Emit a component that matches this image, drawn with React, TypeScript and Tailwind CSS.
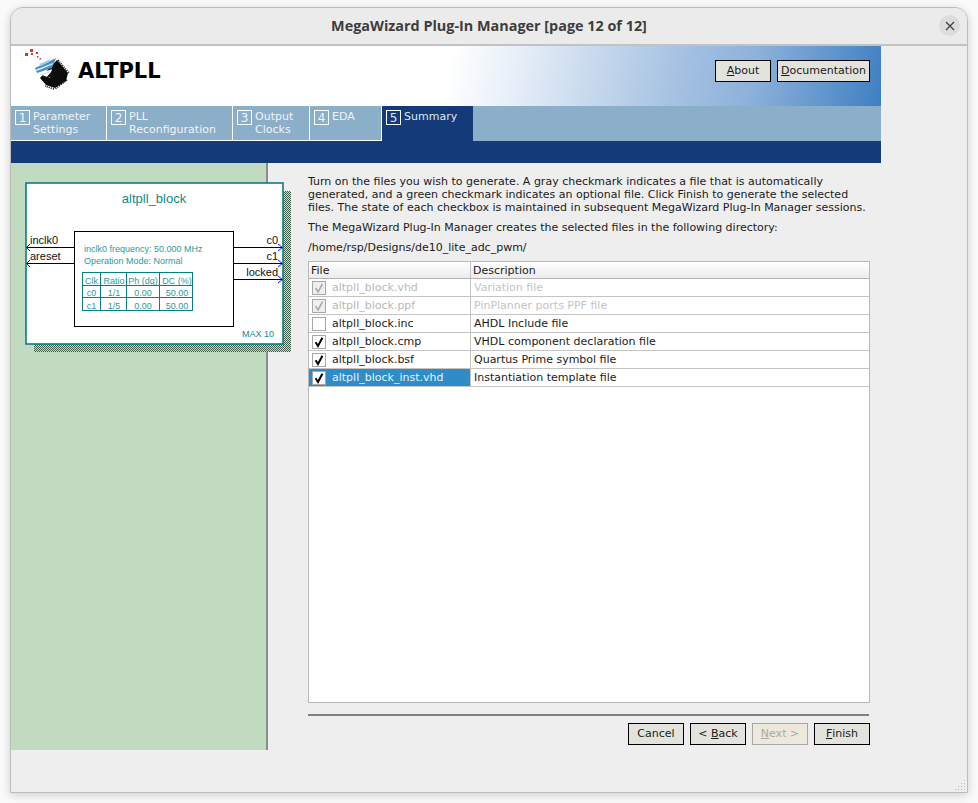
import type { ReactNode } from "react"

const tabs = [
  { n: 1, lines: ["Parameter", "Settings"], w: "w-[96px]" },
  { n: 2, lines: ["PLL", "Reconfiguration"], w: "w-[126px]" },
  { n: 3, lines: ["Output", "Clocks"], w: "w-[77px]" },
  { n: 4, lines: ["EDA"], w: "w-[72px]" },
  { n: 5, lines: ["Summary"], w: "w-[91px]", active: true },
]

const files = [
  { name: "altpll_block.vhd", desc: "Variation file", state: "locked" },
  { name: "altpll_block.ppf", desc: "PinPlanner ports PPF file", state: "locked" },
  { name: "altpll_block.inc", desc: "AHDL Include file", state: "off" },
  { name: "altpll_block.cmp", desc: "VHDL component declaration file", state: "on" },
  { name: "altpll_block.bsf", desc: "Quartus Prime symbol file", state: "on" },
  { name: "altpll_block_inst.vhd", desc: "Instantiation template file", state: "on", selected: true },
]

function Logo() {
  return (
    <svg width="48" height="44" viewBox="22 46 48 44" className="shrink-0">
      {/* red sparks */}
      <g fill="#d9342b">
        <rect x="25" y="53" width="3" height="3" />
        <rect x="30" y="49" width="3" height="3" />
        <rect x="31" y="53" width="2" height="2" />
        <rect x="36" y="52" width="2" height="2" />
        <rect x="37" y="56" width="1.5" height="1.5" />
        <rect x="39.5" y="58" width="1.5" height="1.5" />
      </g>
      {/* chip with pins */}
      <path d="M40 78 L57 60 L68 73 L66 81 L55 88 L46 85 Z" fill="#0c0c0c" />
      <path
        d="M58 60 L69 73 M67 80 L55 89 M54 89 L45 86"
        stroke="#222"
        strokeWidth="1.6"
        strokeDasharray="1.2 1"
        fill="none"
      />
      {/* sheet going into the chip */}
      <path d="M35 68 L56 58 L52 68 L37 73 Z" fill="#4a8cc4" />
      <path d="M39 64 L50 59.5 L50 61.5 L41 66 Z" fill="#a4cae6" />
      <path d="M36 69.5 L53 63 L52.5 64.5 L37 71 Z" fill="#dcebf6" />
      <path d="M39 74 L52 69 L50 78 Z" fill="#fff" />
      <path d="M45 79 L52 71 L53 76 Z" fill="#0c0c0c" />
      <path d="M41 75 L50 71.5" stroke="#bbb" strokeWidth="0.6" />
    </svg>
  )
}

function BarButton({ children, className = "" }: { children: ReactNode; className?: string }) {
  return (
    <button
      type="button"
      className={`flex h-[22px] items-center justify-center border border-black bg-[#e3e3dd] pt-px text-[11px] text-[#1a1a1a] ${className}`}
    >
      {children}
    </button>
  )
}

function Tab({ n, lines, w, active }: { n: number; lines: string[]; w: string; active?: boolean }) {
  return (
    <div
      className={`flex h-[35px] gap-[3px] pl-[4px] pt-[4px] text-[11px] leading-[13px] ${w} ${
        active
          ? "bg-[#143a78] text-[#dfe8f2]"
          : "border-r border-b border-white bg-[#8baec9] text-[#f0f4f8]"
      }`}
    >
      <span className="flex h-[15px] w-[15px] shrink-0 items-center justify-center border border-white text-[12px] leading-none">
        {n}
      </span>
      <div>
        {lines.map((l) => (
          <div key={l}>{l}</div>
        ))}
      </div>
    </div>
  )
}

function Check({ state }: { state: string }) {
  const locked = state === "locked"
  return (
    <span
      className={`mt-[1px] flex h-[14px] w-[14px] items-center justify-center border border-[#a8a8a8] ${
        locked ? "bg-[#eeeeee]" : "bg-white"
      }`}
    >
      {state !== "off" && (
        <svg width="12" height="12" viewBox="0 0 12 12">
          <path
            d="M2.6 6.2 L5 10 L9.4 1.8"
            fill="none"
            stroke={locked ? "#a6a6a6" : "#000"}
            strokeWidth={locked ? 1.5 : 2}
          />
        </svg>
      )}
    </span>
  )
}

// the block symbol is a picture in the wizard, coordinates are page pixels
function BlockDiagram() {
  const teal = "#068080"
  const tableX = [82.5, 100.5, 126, 159, 192.5]
  const tableY = [272.5, 285, 297.5, 310]
  const rows = [
    ["Clk", "Ratio", "Ph (dg)", "DC (%)"],
    ["c0", "1/1", "0.00", "50.00"],
    ["c1", "1/5", "0.00", "50.00"],
  ]
  const textX = [91.5, 114, 143, 177]
  return (
    <svg
      width="270"
      height="175"
      viewBox="24 181 270 175"
      className="ml-[13px] mt-[18px] block overflow-visible"
      fontFamily="'Liberation Sans', Arial, sans-serif"
    >
      <defs>
        <pattern id="hatch" width="2" height="2" patternUnits="userSpaceOnUse">
          <rect width="2" height="2" fill="#d3dccf" />
          <rect width="1" height="1" fill="#3e5a48" />
          <rect x="1" y="1" width="1" height="1" fill="#3e5a48" />
        </pattern>
      </defs>
      <rect x="34" y="191" width="257" height="161" fill="url(#hatch)" shapeRendering="crispEdges" />
      <rect x="26" y="183" width="257" height="161" fill="#fff" stroke={teal} strokeWidth="1.6" />
      <text x="154" y="203" textAnchor="middle" fontSize="13" fill="#108a8a">altpll_block</text>
      <rect x="74.5" y="231.5" width="159" height="95" fill="#fff" stroke="#000" />
      <g stroke="#000" shapeRendering="crispEdges">
        <path d="M27 247.5H74M27 263.5H74M234 247.5H282M234 263.5H282M234 279.5H282" />
      </g>
      <g stroke="#1010f0" fill="none" strokeWidth="1">
        <path d="M30 244L26.5 247.5L30 251M30 260L26.5 263.5L30 267" />
        <path d="M278 244L282.5 247.5L278 251M278 260L282.5 263.5L278 267M278 276L282.5 279.5L278 283" />
      </g>
      <g fontSize="11" fill="#111">
        <text x="30" y="244">inclk0</text>
        <text x="30" y="260">areset</text>
        <text x="278" y="244" textAnchor="end">c0</text>
        <text x="278" y="260" textAnchor="end">c1</text>
        <text x="278" y="276" textAnchor="end">locked</text>
      </g>
      <g fontSize="9" fill="#2a9c9c">
        <text x="84" y="252">inclk0 frequency: 50.000 MHz</text>
        <text x="84" y="264">Operation Mode: Normal</text>
        <text x="242" y="337" fill="#108a8a">MAX 10</text>
        {rows.map((r, i) =>
          r.map((c, j) => (
            <text key={c + i + j} x={textX[j]} y={tableY[i] + 11} textAnchor="middle">{c}</text>
          )),
        )}
      </g>
      <g stroke={teal} shapeRendering="crispEdges">
        {tableX.map((x) => (
          <path key={x} d={`M${x} 272V310.5`} />
        ))}
        {tableY.map((y) => (
          <path key={y} d={`M82 ${y}H193`} />
        ))}
      </g>
    </svg>
  )
}

export default function App() {
  return (
    <div className="h-[803px] w-[978px] overflow-hidden bg-[#fafafa] pl-[10px] pt-[7px] font-['DejaVu_Sans',sans-serif]">
      <div className="flex h-[786px] w-[958px] flex-col rounded-t-[13px] border border-[#bcbcbc] bg-[#eeeeee] shadow-[0_2px_10px_rgba(0,0,0,0.18)]">
        {/* title bar */}
        <div className="relative flex h-[38px] shrink-0 items-center justify-center rounded-t-[12px] border-b-2 border-[#c2c2c2] bg-[#ebebeb]">
          <span className="font-['Open_Sans',sans-serif] text-[14.4px] font-bold text-[#3d3d3d]">
            MegaWizard Plug-In Manager [page 12 of 12]
          </span>
          <span className="absolute right-[7px] top-[7px] flex h-[21px] w-[21px] items-center justify-center rounded-full bg-[#dcdcdc]">
            <svg width="10" height="10" viewBox="0 0 10 10">
              <path d="M1 1L9 9M9 1L1 9" stroke="#3d3d3d" strokeWidth="1.2" />
            </svg>
          </span>
        </div>

        {/* banner */}
        <div className="flex h-[60px] w-[870px] shrink-0 items-start bg-[linear-gradient(100deg,#ffffff_0%,#ffffff_50%,#e6eef8_58%,#a6c2e2_76%,#8cb1db_85%,#3f7fc2_100%)] pl-[11px] pr-[11px]">
          <Logo />
          <span className="ml-[8px] mt-[11px] text-[21px] font-bold leading-[28px] text-black">ALTPLL</span>
          <div className="ml-auto mt-[14px] flex gap-[6px]">
            <BarButton className="w-[56px]"><span className="underline">A</span>bout</BarButton>
            <BarButton className="w-[93px]"><span className="underline">D</span>ocumentation</BarButton>
          </div>
        </div>

        {/* steps */}
        <div className="flex w-[870px] shrink-0 bg-[#8baec9]">
          {tabs.map((t) => (
            <Tab key={t.n} {...t} />
          ))}
        </div>
        <div className="h-[22px] w-[870px] shrink-0 bg-[#143a78]" />

        <div className="flex h-[587px] shrink-0">
          {/* green side panel */}
          <div className="w-[257px] shrink-0 border-r-2 border-[#8c8c8c] bg-[#c0dbbf]">
            <BlockDiagram />
          </div>

          <div className="ml-[40px] flex w-[562px] flex-col">
            <div className="mt-[12px] text-[11px] leading-[13px] text-[#1a1a1a]">
              <p>
                Turn on the files you wish to generate. A gray checkmark indicates a file that is automatically
                <br />
                generated, and a green checkmark indicates an optional file. Click Finish to generate the selected
                <br />
                files. The state of each checkbox is maintained in subsequent MegaWizard Plug-In Manager sessions.
              </p>
              <p className="mt-[7px]">The MegaWizard Plug-In Manager creates the selected files in the following directory:</p>
              <p className="mt-[7px]">/home/rsp/Designs/de10_lite_adc_pwm/</p>
            </div>

            {/* file table */}
            <div className="mt-[7px] h-[442px] w-[562px] border border-[#b8b8b8] bg-white text-[11px] text-[#1a1a1a]">
              <div className="flex h-[17px] border-b border-[#b4b4b4] bg-[linear-gradient(#ffffff,#ececec)] leading-[17px]">
                <div className="w-[162px] border-r border-[#c4c4c4] pl-[2px]">File</div>
                <div className="pl-[2px]">Description</div>
              </div>
              {files.map((f) => (
                <div key={f.name} className="flex h-[18px] border-b border-[#c4c4c4] leading-[17px]">
                  <div
                    className={`flex w-[162px] items-center gap-[6px] border-r border-[#c4c4c4] pl-[3px] ${
                      f.selected ? "bg-[#308cc6] text-[#e6f2fa]" : f.state === "locked" ? "text-[#b8b8b8]" : ""
                    }`}
                  >
                    <Check state={f.state} />
                    <span>{f.name}</span>
                  </div>
                  <div className={`pl-[3px] ${f.state === "locked" ? "text-[#c4c4c4]" : ""}`}>{f.desc}</div>
                </div>
              ))}
            </div>

            <div className="mt-[11px] h-[2px] w-[561px] bg-[#808080]" />

            <div className="mt-[7px] flex justify-end gap-[6px]">
              <BarButton className="w-[56px]">Cancel</BarButton>
              <BarButton className="w-[56px]">&lt;&nbsp;<span className="underline">B</span>ack</BarButton>
              <button
                type="button"
                className="flex h-[22px] w-[56px] items-center justify-center border border-[#a6a6a6] bg-[#ece9dc] pt-px text-[11px] text-[#a8a8a8]"
              >
                <span className="underline">N</span>ext &gt;
              </button>
              <BarButton className="w-[56px]"><span className="underline">F</span>inish</BarButton>
            </div>
          </div>
        </div>

        {/* size grip */}
        <div className="mt-auto flex justify-end pb-[1px] pr-[1px]">
          <svg width="12" height="12" viewBox="0 0 12 12" fill="#bdbdbd">
            <rect x="10" y="1" width="1" height="1" />
            <rect x="10" y="4" width="1" height="1" />
            <rect x="7" y="4" width="1" height="1" />
            <rect x="10" y="7" width="1" height="1" />
            <rect x="7" y="7" width="1" height="1" />
            <rect x="4" y="7" width="1" height="1" />
            <rect x="10" y="10" width="1" height="1" />
            <rect x="7" y="10" width="1" height="1" />
            <rect x="4" y="10" width="1" height="1" />
            <rect x="1" y="10" width="1" height="1" />
          </svg>
        </div>
      </div>
    </div>
  )
}
